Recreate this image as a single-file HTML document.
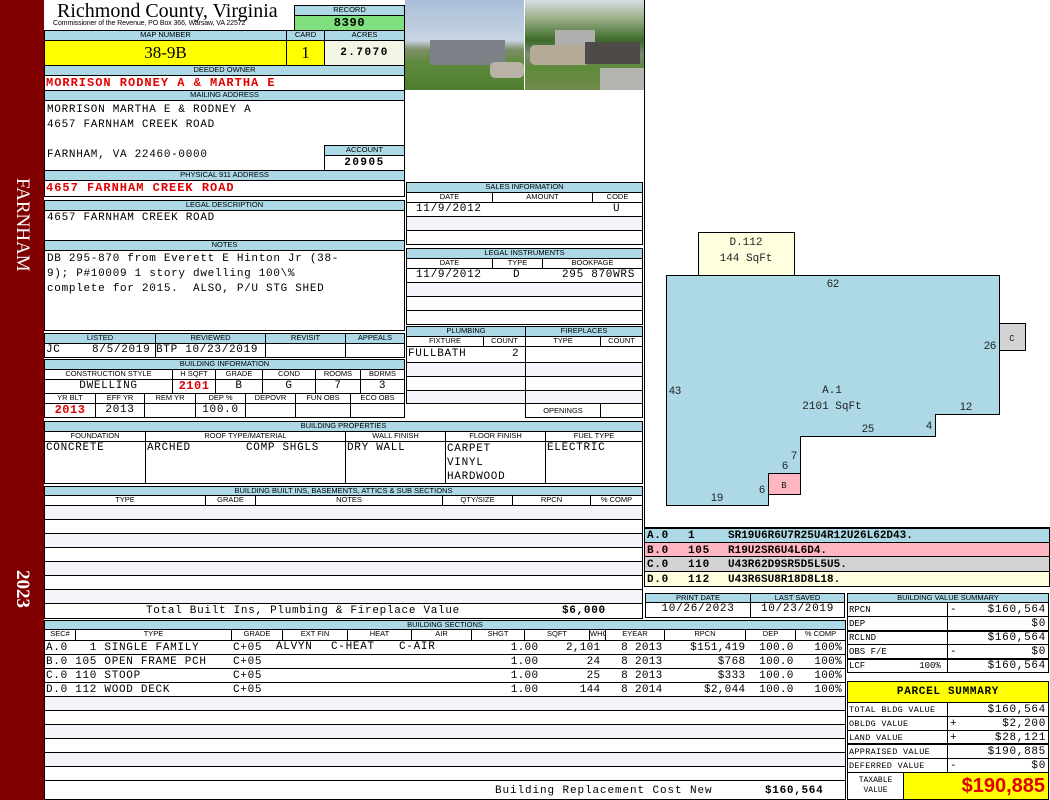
<!DOCTYPE html>
<html><head><meta charset="utf-8"><style>
*{margin:0;padding:0;box-sizing:border-box}
body{width:1050px;height:800px;position:relative;background:#fff;overflow:hidden;font-family:"Liberation Sans",sans-serif}
.a{position:absolute}
.lb{position:absolute;background:#add8e6;border:1px solid #000;font:7.5px/8px "Liberation Sans",sans-serif;text-align:center;color:#000;overflow:hidden;white-space:nowrap}
.bx{position:absolute;border:1px solid #000;background:#fff}
.m{position:absolute;font:11px/13px "Liberation Mono",monospace;white-space:pre;color:#000;letter-spacing:0.7px}
.r{color:#e00000;font-weight:bold;font-size:12px;letter-spacing:1px}
.c{text-align:center}
.rt{text-align:right}
.g{background:#f4f4fa}
</style></head><body>
<!-- sidebar -->
<div class="a" style="left:0;top:0;width:44px;height:800px;background:#800000"></div>
<div class="a" style="left:11px;top:178px;width:22px;height:125px;"><div style="transform:rotate(90deg);transform-origin:0 0;position:absolute;left:22px;top:0;font:19px 'Liberation Serif',serif;color:#fff;white-space:nowrap;line-height:22px">FARNHAM</div></div>
<div class="a" style="left:11px;top:570px;width:22px;height:50px;"><div style="transform:rotate(90deg);transform-origin:0 0;position:absolute;left:22px;top:0;font:bold 19px 'Liberation Serif',serif;color:#fff;white-space:nowrap;line-height:22px">2023</div></div>

<!-- header -->
<div class="a" style="left:57px;top:0px;font:20px/22px 'Liberation Serif',serif">Richmond County, Virginia</div>
<div class="a" style="left:53px;top:20px;font:7px/8px 'Liberation Sans',sans-serif;letter-spacing:-0.1px">Commissioner of the Revenue, PO Box 366, Warsaw, VA 22572</div>
<div class="lb" style="left:294px;top:5px;width:111px;height:11px">RECORD</div>
<div class="bx m c" style="left:294px;top:15px;width:111px;height:16px;background:#80e080;font-weight:bold;font-size:12px;line-height:14px">8390</div>
<div class="lb" style="left:44px;top:30px;width:243px;height:11px">MAP NUMBER</div>
<div class="lb" style="left:286px;top:30px;width:39px;height:11px">CARD</div>
<div class="lb" style="left:324px;top:30px;width:81px;height:11px">ACRES</div>
<div class="bx c" style="left:44px;top:40px;width:243px;height:26px;background:#ffff00;font:17px/24px 'Liberation Serif',serif">38-9B</div>
<div class="bx c" style="left:286px;top:40px;width:39px;height:26px;background:#ffff00;font:17px/24px 'Liberation Serif',serif">1</div>
<div class="bx m c" style="left:324px;top:40px;width:81px;height:26px;background:#f5f5e6;font-weight:bold;line-height:24px;letter-spacing:1.5px">2.7070</div>

<div class="lb" style="left:44px;top:65px;width:361px;height:11px">DEEDED OWNER</div>
<div class="bx" style="left:44px;top:75px;width:361px;height:16px"></div>
<div class="m r" style="left:46px;top:77px">MORRISON RODNEY A &amp; MARTHA E</div>
<div class="lb" style="left:44px;top:90px;width:361px;height:11px">MAILING ADDRESS</div>
<div class="bx" style="left:44px;top:100px;width:361px;height:71px"></div>
<div class="m" style="left:47px;top:103px;line-height:15px">MORRISON MARTHA E &amp; RODNEY A
4657 FARNHAM CREEK ROAD

FARNHAM, VA 22460-0000</div>
<div class="lb" style="left:324px;top:145px;width:81px;height:11px">ACCOUNT</div>
<div class="bx m c" style="left:324px;top:155px;width:81px;height:16px;font-weight:bold;line-height:14px;letter-spacing:1.5px">20905</div>
<div class="lb" style="left:44px;top:170px;width:361px;height:11px">PHYSICAL 911 ADDRESS</div>
<div class="bx" style="left:44px;top:180px;width:361px;height:17px"></div>
<div class="m r" style="left:46px;top:182px">4657 FARNHAM CREEK ROAD</div>
<div class="lb" style="left:44px;top:200px;width:361px;height:11px">LEGAL DESCRIPTION</div>
<div class="bx" style="left:44px;top:210px;width:361px;height:31px"></div>
<div class="m" style="left:47px;top:212px">4657 FARNHAM CREEK ROAD</div>
<div class="lb" style="left:44px;top:240px;width:361px;height:11px">NOTES</div>
<div class="bx" style="left:44px;top:250px;width:361px;height:81px"></div>
<div class="m" style="left:47px;top:252px;line-height:15px">DB 295-870 from Everett E Hinton Jr (38-
9); P#10009 1 story dwelling 100\%
complete for 2015.  ALSO, P/U STG SHED</div>

<!-- listed -->
<div class="lb" style="left:44px;top:333px;width:112px;height:11px">LISTED</div>
<div class="lb" style="left:155px;top:333px;width:111px;height:11px">REVIEWED</div>
<div class="lb" style="left:265px;top:333px;width:81px;height:11px">REVISIT</div>
<div class="lb" style="left:345px;top:333px;width:60px;height:11px">APPEALS</div>
<div class="bx" style="left:44px;top:343px;width:112px;height:15px"></div>
<div class="bx" style="left:155px;top:343px;width:111px;height:15px"></div>
<div class="bx" style="left:265px;top:343px;width:81px;height:15px"></div>
<div class="bx" style="left:345px;top:343px;width:60px;height:15px"></div>
<div class="m" style="left:46px;top:344px">JC</div>
<div class="m" style="left:92px;top:344px">8/5/2019</div>
<div class="m" style="left:156px;top:344px">BTP 10/23/2019</div>

<!-- building info -->
<div class="lb" style="left:44px;top:359px;width:361px;height:11px">BUILDING INFORMATION</div>
<div class="lb" style="left:44px;top:369px;width:129px;height:11px;background:#fff">CONSTRUCTION STYLE</div>
<div class="lb" style="left:172px;top:369px;width:44px;height:11px;background:#fff">H SQFT</div>
<div class="lb" style="left:215px;top:369px;width:48px;height:11px;background:#fff">GRADE</div>
<div class="lb" style="left:262px;top:369px;width:54px;height:11px;background:#fff">COND</div>
<div class="lb" style="left:315px;top:369px;width:46px;height:11px;background:#fff">ROOMS</div>
<div class="lb" style="left:360px;top:369px;width:45px;height:11px;background:#fff">BDRMS</div>
<div class="bx m c" style="left:44px;top:379px;width:129px;height:15px">DWELLING</div>
<div class="bx m c r" style="left:172px;top:379px;width:44px;height:15px;letter-spacing:0.5px">2101</div>
<div class="bx m c" style="left:215px;top:379px;width:48px;height:15px">B</div>
<div class="bx m c" style="left:262px;top:379px;width:54px;height:15px">G</div>
<div class="bx m c" style="left:315px;top:379px;width:46px;height:15px">7</div>
<div class="bx m c" style="left:360px;top:379px;width:45px;height:15px">3</div>
<div class="lb" style="left:44px;top:393px;width:52px;height:11px;background:#fff">YR BLT</div>
<div class="lb" style="left:95px;top:393px;width:50px;height:11px;background:#fff">EFF YR</div>
<div class="lb" style="left:144px;top:393px;width:52px;height:11px;background:#fff">REM YR</div>
<div class="lb" style="left:195px;top:393px;width:51px;height:11px;background:#fff">DEP %</div>
<div class="lb" style="left:245px;top:393px;width:51px;height:11px;background:#fff">DEPOVR</div>
<div class="lb" style="left:295px;top:393px;width:56px;height:11px;background:#fff">FUN OBS</div>
<div class="lb" style="left:350px;top:393px;width:55px;height:11px;background:#fff">ECO OBS</div>
<div class="bx m c r" style="left:44px;top:403px;width:52px;height:15px;letter-spacing:0.5px">2013</div>
<div class="bx m c" style="left:95px;top:403px;width:50px;height:15px">2013</div>
<div class="bx" style="left:144px;top:403px;width:52px;height:15px"></div>
<div class="bx m c" style="left:195px;top:403px;width:51px;height:15px">100.0</div>
<div class="bx" style="left:245px;top:403px;width:51px;height:15px"></div>
<div class="bx" style="left:295px;top:403px;width:56px;height:15px"></div>
<div class="bx" style="left:350px;top:403px;width:55px;height:15px"></div>

<!-- photos -->
<div class="a" style="left:405px;top:0;width:119px;height:90px;background:linear-gradient(#a9bfd8 0%,#c8d4e2 45%,#7f8f6a 55%,#5e8a3c 70%,#4f7d2e 100%)"></div>
<div class="a" style="left:430px;top:40px;width:75px;height:25px;background:#7d8289"></div>
<div class="a" style="left:490px;top:62px;width:34px;height:16px;background:#b9b2a6;border-radius:5px"></div>
<div class="a" style="left:525px;top:0;width:119px;height:90px;background:linear-gradient(#d7dde5 0%,#9cb08a 20%,#3c6a2a 45%,#7e8a76 60%,#5d8a38 75%,#6f8a4c 100%)"></div>
<div class="a" style="left:555px;top:30px;width:40px;height:18px;background:#b0afae"></div>
<div class="a" style="left:530px;top:45px;width:60px;height:20px;background:#b4aa98;border-radius:5px"></div>
<div class="a" style="left:585px;top:42px;width:55px;height:22px;background:#4d4a48"></div>
<div class="a" style="left:600px;top:68px;width:44px;height:22px;background:#b5b5b0"></div>

<!-- sales -->
<div class="lb" style="left:406px;top:182px;width:237px;height:11px">SALES INFORMATION</div>
<div class="lb" style="left:406px;top:192px;width:87px;height:11px;background:#fff">DATE</div>
<div class="lb" style="left:492px;top:192px;width:101px;height:11px;background:#fff">AMOUNT</div>
<div class="lb" style="left:592px;top:192px;width:51px;height:11px;background:#fff">CODE</div>
<div class="bx" style="left:406px;top:202px;width:237px;height:15px"></div>
<div class="m" style="left:416px;top:203px">11/9/2012</div>
<div class="m" style="left:613px;top:203px">U</div>
<div class="bx g" style="left:406px;top:216px;width:237px;height:15px"></div>
<div class="bx" style="left:406px;top:230px;width:237px;height:15px"></div>
<div class="lb" style="left:406px;top:248px;width:237px;height:11px">LEGAL INSTRUMENTS</div>
<div class="lb" style="left:406px;top:258px;width:87px;height:11px;background:#fff">DATE</div>
<div class="lb" style="left:492px;top:258px;width:51px;height:11px;background:#fff">TYPE</div>
<div class="lb" style="left:542px;top:258px;width:101px;height:11px;background:#fff">BOOKPAGE</div>
<div class="bx" style="left:406px;top:268px;width:237px;height:15px"></div>
<div class="m" style="left:416px;top:269px">11/9/2012</div>
<div class="m" style="left:513px;top:269px">D</div>
<div class="m" style="left:562px;top:269px">295 870WRS</div>
<div class="bx g" style="left:406px;top:282px;width:237px;height:15px"></div>
<div class="bx" style="left:406px;top:296px;width:237px;height:15px"></div>
<div class="bx" style="left:406px;top:310px;width:237px;height:15px"></div>

<!-- plumbing -->
<div class="lb" style="left:406px;top:326px;width:120px;height:11px">PLUMBING</div>
<div class="lb" style="left:525px;top:326px;width:118px;height:11px">FIREPLACES</div>
<div class="lb" style="left:406px;top:336px;width:78px;height:11px;background:#fff">FIXTURE</div>
<div class="lb" style="left:483px;top:336px;width:43px;height:11px;background:#fff">COUNT</div>
<div class="lb" style="left:525px;top:336px;width:76px;height:11px;background:#fff">TYPE</div>
<div class="lb" style="left:600px;top:336px;width:43px;height:11px;background:#fff">COUNT</div>
<div class="bx" style="left:406px;top:346px;width:120px;height:17px"></div>
<div class="m" style="left:408px;top:348px">FULLBATH</div><div class="m" style="left:512px;top:348px">2</div>
<div class="bx g" style="left:406px;top:362px;width:120px;height:15px"></div>
<div class="bx" style="left:406px;top:376px;width:120px;height:15px"></div>
<div class="bx g" style="left:406px;top:390px;width:120px;height:14px"></div>
<div class="bx" style="left:525px;top:346px;width:118px;height:17px"></div>
<div class="bx g" style="left:525px;top:362px;width:118px;height:15px"></div>
<div class="bx" style="left:525px;top:376px;width:118px;height:15px"></div>
<div class="bx g" style="left:525px;top:390px;width:118px;height:14px"></div>
<div class="lb" style="left:525px;top:403px;width:76px;height:15px;background:#fff;line-height:13px">OPENINGS</div>
<div class="bx" style="left:600px;top:403px;width:43px;height:15px"></div>

<!-- building properties -->
<div class="lb" style="left:44px;top:421px;width:599px;height:11px">BUILDING PROPERTIES</div>
<div class="lb" style="left:44px;top:431px;width:102px;height:11px;background:#fff">FOUNDATION</div>
<div class="lb" style="left:145px;top:431px;width:201px;height:11px;background:#fff">ROOF TYPE/MATERIAL</div>
<div class="lb" style="left:345px;top:431px;width:101px;height:11px;background:#fff">WALL FINISH</div>
<div class="lb" style="left:445px;top:431px;width:101px;height:11px;background:#fff">FLOOR FINISH</div>
<div class="lb" style="left:545px;top:431px;width:98px;height:11px;background:#fff">FUEL TYPE</div>
<div class="bx" style="left:44px;top:441px;width:102px;height:43px"></div>
<div class="bx" style="left:145px;top:441px;width:201px;height:43px"></div>
<div class="bx" style="left:345px;top:441px;width:101px;height:43px"></div>
<div class="bx" style="left:445px;top:441px;width:101px;height:43px"></div>
<div class="bx" style="left:545px;top:441px;width:98px;height:43px"></div>
<div class="m" style="left:46px;top:442px">CONCRETE</div>
<div class="m" style="left:147px;top:442px">ARCHED</div>
<div class="m" style="left:246px;top:442px">COMP SHGLS</div>
<div class="m" style="left:347px;top:442px">DRY WALL</div>
<div class="m" style="left:447px;top:442px;line-height:14px">CARPET
VINYL
HARDWOOD</div>
<div class="m" style="left:547px;top:442px">ELECTRIC</div>

<!-- built ins -->
<div class="lb" style="left:44px;top:486px;width:599px;height:11px">BUILDING BUILT INS, BASEMENTS, ATTICS &amp; SUB SECTIONS</div>
<div class="lb" style="left:44px;top:495px;width:162px;height:11px;background:#fff">TYPE</div>
<div class="lb" style="left:205px;top:495px;width:51px;height:11px;background:#fff">GRADE</div>
<div class="lb" style="left:255px;top:495px;width:188px;height:11px;background:#fff">NOTES</div>
<div class="lb" style="left:442px;top:495px;width:71px;height:11px;background:#fff">QTY/SIZE</div>
<div class="lb" style="left:512px;top:495px;width:79px;height:11px;background:#fff">RPCN</div>
<div class="lb" style="left:590px;top:495px;width:53px;height:11px;background:#fff">% COMP</div>
<div class="bx g" style="left:44px;top:505px;width:599px;height:15px"></div>
<div class="bx" style="left:44px;top:519px;width:599px;height:15px"></div>
<div class="bx g" style="left:44px;top:533px;width:599px;height:15px"></div>
<div class="bx" style="left:44px;top:547px;width:599px;height:15px"></div>
<div class="bx g" style="left:44px;top:561px;width:599px;height:15px"></div>
<div class="bx" style="left:44px;top:575px;width:599px;height:15px"></div>
<div class="bx g" style="left:44px;top:589px;width:599px;height:15px"></div>
<div class="bx" style="left:44px;top:603px;width:599px;height:16px"></div>
<div class="m" style="left:146px;top:605px">Total Built Ins, Plumbing &amp; Fireplace Value</div>
<div class="m" style="left:562px;top:605px;font-weight:bold">$6,000</div>

<!-- print date -->
<div class="lb" style="left:645px;top:593px;width:106px;height:10px">PRINT DATE</div>
<div class="lb" style="left:750px;top:593px;width:95px;height:10px">LAST SAVED</div>
<div class="bx m c" style="left:645px;top:602px;width:106px;height:16px">10/26/2023</div>
<div class="bx m c" style="left:750px;top:602px;width:95px;height:16px">10/23/2019</div>

<!-- building sections -->
<div class="lb" style="left:44px;top:620px;width:802px;height:10px">BUILDING SECTIONS</div>
<div class="a" style="left:44px;top:629px;width:802px;height:171px;border:1px solid #000"></div>
<div class="lb" style="left:44px;top:629px;width:32px;height:12px;background:#fff">SEC#</div>
<div class="lb" style="left:75px;top:629px;width:157px;height:12px;background:#fff">TYPE</div>
<div class="lb" style="left:231px;top:629px;width:52px;height:12px;background:#fff">GRADE</div>
<div class="lb" style="left:282px;top:629px;width:66px;height:12px;background:#fff">EXT FIN</div>
<div class="lb" style="left:347px;top:629px;width:65px;height:12px;background:#fff">HEAT</div>
<div class="lb" style="left:411px;top:629px;width:61px;height:12px;background:#fff">AIR</div>
<div class="lb" style="left:471px;top:629px;width:54px;height:12px;background:#fff">SHGT</div>
<div class="lb" style="left:524px;top:629px;width:66px;height:12px;background:#fff">SQFT</div>
<div class="lb" style="left:589px;top:629px;width:17px;height:12px;background:#fff">WHGT</div>
<div class="lb" style="left:605px;top:629px;width:60px;height:12px;background:#fff">EYEAR</div>
<div class="lb" style="left:664px;top:629px;width:82px;height:12px;background:#fff">RPCN</div>
<div class="lb" style="left:745px;top:629px;width:51px;height:12px;background:#fff">DEP</div>
<div class="lb" style="left:795px;top:629px;width:51px;height:12px;background:#fff">% COMP</div>
<div class="bx" style="left:44px;top:640px;width:802px;height:15px"></div>
<div class="bx" style="left:44px;top:654px;width:802px;height:15px"></div>
<div class="bx" style="left:44px;top:668px;width:802px;height:15px"></div>
<div class="bx" style="left:44px;top:682px;width:802px;height:15px"></div>
<div class="bx g" style="left:44px;top:696px;width:802px;height:15px"></div>
<div class="bx" style="left:44px;top:710px;width:802px;height:15px"></div>
<div class="bx g" style="left:44px;top:724px;width:802px;height:15px"></div>
<div class="bx" style="left:44px;top:738px;width:802px;height:15px"></div>
<div class="bx g" style="left:44px;top:752px;width:802px;height:15px"></div>
<div class="bx" style="left:44px;top:766px;width:802px;height:15px"></div>
<div class="bx" style="left:44px;top:780px;width:802px;height:20px"></div>
<div class="m" style="left:46px;top:641px;line-height:14px">A.0   1 SINGLE FAMILY
B.0 105 OPEN FRAME PCH
C.0 110 STOOP
D.0 112 WOOD DECK</div>
<div class="m" style="left:233px;top:641px;line-height:14px">C+05
C+05
C+05
C+05</div>
<div class="m" style="left:276px;top:641px">ALVYN</div>
<div class="m" style="left:331px;top:641px">C-HEAT</div>
<div class="m" style="left:399px;top:641px">C-AIR</div>
<div class="m rt" style="left:470px;top:641px;width:372px;line-height:14px;letter-spacing:0.3px">1.00    2,101   8 2013    $151,419  100.0   100%
1.00       24   8 2013        $768  100.0   100%
1.00       25   8 2013        $333  100.0   100%
1.00      144   8 2014      $2,044  100.0   100%</div>
<div class="m" style="left:495px;top:785px;letter-spacing:0.9px">Building Replacement Cost New</div>
<div class="m" style="left:765px;top:785px;font-weight:bold">$160,564</div>

<!-- sketch -->
<div class="a" style="left:644px;top:0;width:406px;height:528px;border-left:1px solid #000;border-bottom:1px solid #000"></div>
<svg class="a" style="left:0;top:0" width="1050" height="528">
<rect x="698.5" y="232.5" width="96" height="43" fill="#ffffe0" stroke="#000"/>
<polygon points="666.5,275.5 999.5,275.5 999.5,414.5 935.5,414.5 935.5,436.5 800.5,436.5 800.5,473.5 768.5,473.5 768.5,505.5 666.5,505.5" fill="#add8e6" stroke="#000"/>
<rect x="768.5" y="473.5" width="32" height="21" fill="#ffb6c1" stroke="#000"/>
<rect x="999.5" y="323.5" width="26" height="27" fill="#d3d3d3" stroke="#000"/>
<g font-family="Liberation Mono,monospace" font-size="11" text-anchor="middle" fill="#222">
<text x="746" y="245">D.112</text><text x="746" y="261">144 SqFt</text>
<text x="832" y="393">A.1</text><text x="832" y="409">2101 SqFt</text>
<text x="784" y="488" font-size="9">B</text><text x="1012" y="341" font-size="9">C</text>
</g>
<g font-family="Liberation Sans,sans-serif" font-size="11" fill="#222" text-anchor="middle">
<text x="833" y="287">62</text><text x="990" y="349">26</text><text x="675" y="394">43</text>
<text x="966" y="410">12</text><text x="929" y="429">4</text><text x="868" y="432">25</text>
<text x="794" y="459">7</text><text x="785" y="469">6</text><text x="762" y="493">6</text><text x="717" y="501">19</text>
</g>
</svg>
<div class="bx" style="left:644px;top:528px;width:406px;height:15px;background:#add8e6"></div>
<div class="bx" style="left:644px;top:542px;width:406px;height:15px;background:#ffb6c1"></div>
<div class="bx" style="left:644px;top:556px;width:406px;height:16px;background:#d3d3d3"></div>
<div class="bx" style="left:644px;top:571px;width:406px;height:16px;background:#ffffe0"></div>
<div class="m" style="left:647px;top:529px;font-weight:bold;line-height:14.5px">A.0
B.0
C.0
D.0</div>
<div class="m" style="left:688px;top:529px;font-weight:bold;line-height:14.5px">1
105
110
112</div>
<div class="m" style="left:728px;top:529px;font-weight:bold;line-height:14.5px;letter-spacing:0">SR19U6R6U7R25U4R12U26L62D43.
R19U2SR6U4L6D4.
U43R62D9SR5D5L5U5.
U43R6SU8R18D8L18.</div>

<!-- building value summary -->
<div class="lb" style="left:847px;top:593px;width:202px;height:10px">BUILDING VALUE SUMMARY</div>
<div class="bx" style="left:847px;top:602px;width:101px;height:71px"></div>
<div class="bx" style="left:947px;top:602px;width:102px;height:71px"></div>
<div class="a" style="left:847px;top:616px;width:202px;border-top:1px solid #000"></div>
<div class="a" style="left:847px;top:630px;width:202px;border-top:2px solid #000"></div>
<div class="a" style="left:847px;top:644px;width:202px;border-top:1px solid #000"></div>
<div class="a" style="left:847px;top:658px;width:202px;border-top:2px solid #000"></div>
<div class="m" style="left:849px;top:603px;font-size:9px;line-height:14px;letter-spacing:0">RPCN
DEP
RCLND
OBS F/E
LCF          100%</div>
<div class="m" style="left:950px;top:603px;line-height:14px">-
 
 
-</div>
<div class="m rt" style="left:950px;top:603px;width:96px;line-height:14px">$160,564
$0
$160,564
$0
$160,564</div>

<!-- parcel summary -->
<div class="bx" style="left:847px;top:681px;width:202px;height:22px;background:#ffff00;font:bold 11px/20px 'Liberation Mono',monospace;text-align:center;letter-spacing:0.7px">PARCEL SUMMARY</div>
<div class="bx" style="left:847px;top:702px;width:101px;height:71px"></div>
<div class="bx" style="left:947px;top:702px;width:102px;height:71px"></div>
<div class="a" style="left:847px;top:716px;width:202px;border-top:1px solid #000"></div>
<div class="a" style="left:847px;top:730px;width:202px;border-top:1px solid #000"></div>
<div class="a" style="left:847px;top:743px;width:202px;border-top:2px solid #000"></div>
<div class="a" style="left:847px;top:758px;width:202px;border-top:1px solid #000"></div>
<div class="m" style="left:849px;top:703px;font-size:8.5px;line-height:14px;letter-spacing:0.3px">TOTAL BLDG VALUE
OBLDG VALUE
LAND VALUE
APPRAISED VALUE
DEFERRED VALUE</div>
<div class="m" style="left:950px;top:703px;line-height:14px"> 
+
+
 
-</div>
<div class="m rt" style="left:950px;top:703px;width:96px;line-height:14px">$160,564
$2,200
$28,121
$190,885
$0</div>
<div class="bx m c" style="left:847px;top:772px;width:57px;height:28px;font-size:8px;line-height:10px;padding-top:3px;letter-spacing:0">TAXABLE
VALUE</div>
<div class="bx" style="left:903px;top:772px;width:146px;height:28px;background:#ffff00;font:bold 20px/26px 'Liberation Sans',sans-serif;color:#e00000;text-align:right;padding-right:3px">$190,885</div>
</body></html>
